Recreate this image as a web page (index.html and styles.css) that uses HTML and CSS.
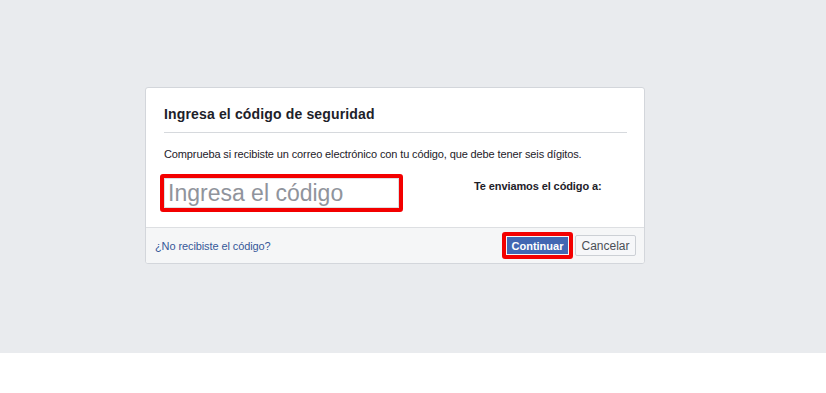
FILE: index.html
```html
<!DOCTYPE html>
<html lang="es">
  <head>
    <meta charset="UTF-8" />
    <meta name="viewport" content="width=device-width, initial-scale=1.0" />
    <title>Ingresa el código de seguridad</title>
    <link rel="stylesheet" href="styles.css">
  </head>
  <body>
    <div class="stage">
      <div class="card">
        <div class="card-header">
          <h2>Ingresa el código de seguridad</h2>
        </div>
        <div class="card-body">
          <p>Comprueba si recibiste un correo electrónico con tu código, que debe tener seis dígitos.</p>
          <div class="code-row">
            <div class="code-box">
              <input type="text" placeholder="Ingresa el código" />
            </div>
            <div class="sent-to">Te enviamos el código a:</div>
          </div>
        </div>
        <div class="card-footer">
          <a href="#resend">¿No recibiste el código?</a>
          <div class="actions">
            <span class="mark">
              <button class="btn-primary">Continuar</button>
            </span>
            <button class="btn-cancel">Cancelar</button>
          </div>
        </div>
      </div>
    </div>
  </body>
</html>
```

FILE: styles.css
```css
body {
  font-family: "Liberation Sans", Arial, sans-serif;
  color: #1d2129;
  background-color: #fff;
  margin: 0;
  padding: 0;
}
.stage {
  background: #e9ebee;
  height: 353px;
  padding-top: 87px;
  box-sizing: border-box;
}
.card {
  width: 500px;
  margin-left: 145px;
  background: #fff;
  border: 1px solid #d3d6db;
  border-radius: 3px;
  box-sizing: border-box;
  overflow: hidden;
}
.card-header {
  margin: 0 17px 0 18px;
  padding: 17px 0 9px;
  border-bottom: 1px solid #d6d9dd;
}
.card-header h2 {
  margin: 0;
  font-size: 14px;
  line-height: 18px;
  font-weight: bold;
  letter-spacing: 0.15px;
}
.card-body {
  padding: 13px 18px 15px;
}
.card-body p {
  margin: 0 0 12px;
  font-size: 11px;
  line-height: 16px;
  letter-spacing: -0.12px;
}
.code-row {
  display: flex;
  align-items: flex-start;
}
.code-box {
  width: 243px;
  height: 38px;
  margin-left: -4px;
  border: 4px solid #f30000;
  border-radius: 3px;
  box-sizing: border-box;
}
.code-box input {
  width: 100%;
  height: 100%;
  box-sizing: border-box;
  border: 1px solid #dddfe2;
  padding: 0 0 0 3px;
  font-family: "Liberation Sans", Arial, sans-serif;
  font-size: 23px;
  color: #1d2129;
  outline: none;
}
.code-box input::placeholder {
  color: #90949c;
}
.sent-to {
  margin-left: 71px;
  padding-top: 4px;
  font-size: 11px;
  line-height: 16px;
  font-weight: bold;
  letter-spacing: -0.1px;
}
.card-footer {
  display: flex;
  align-items: center;
  justify-content: space-between;
  height: 35px;
  padding: 0 8px 0 9px;
  background: #f5f6f7;
  border-top: 1px solid #dddfe2;
}
.card-footer a {
  color: #365899;
  font-size: 11px;
  letter-spacing: -0.1px;
  text-decoration: none;
}
.actions {
  display: flex;
  align-items: center;
  gap: 2px;
}
.mark {
  display: flex;
  padding: 1px;
  border: 4px solid #f30000;
  border-radius: 3px;
}
.btn-primary {
  width: 61px;
  height: 17px;
  padding: 0;
  border: 0;
  background: #4267b2;
  color: #fff;
  font-family: "Liberation Sans", Arial, sans-serif;
  font-size: 11px;
  font-weight: bold;
}
.btn-cancel {
  width: 61px;
  height: 21px;
  padding: 0;
  border: 1px solid #ccd0d5;
  border-radius: 2px;
  background: #f6f7f9;
  color: #4b4f56;
  font-family: "Liberation Sans", Arial, sans-serif;
  font-size: 12px;
}
```
